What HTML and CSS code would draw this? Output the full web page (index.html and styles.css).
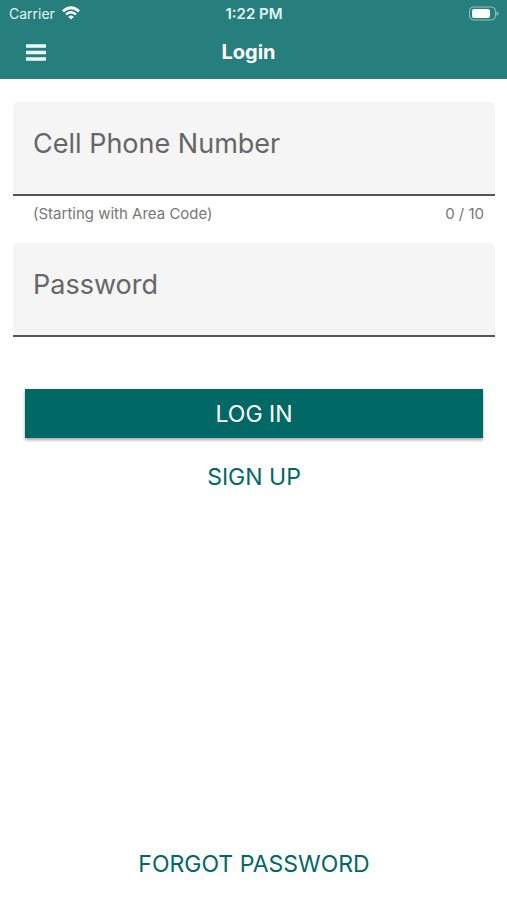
FILE: index.html
```html
<!DOCTYPE html>
<html lang="en">
<head>
<meta charset="utf-8">
<meta name="viewport" content="width=device-width, initial-scale=1">
<title>Login</title>
<link rel="stylesheet" href="styles.css">
</head>
<body>
<header class="header">
  <div class="status">
    <div class="carrier">
      <span>Carrier</span>
      <svg class="wifi" viewBox="0 0 18 14" aria-hidden="true">
        <path d="M1 5.200Q9 -1.800 17 5.200" fill="none" stroke="currentColor" stroke-width="2.800"/>
        <path d="M4 8.400Q9 3.900 14 8.400" fill="none" stroke="currentColor" stroke-width="2.400"/>
        <path d="M6.200 10.700Q9 8.500 11.800 10.700L9 13.600Z" fill="currentColor"/>
      </svg>
    </div>
    <span class="time">1:22 PM</span>
    <svg class="battery" viewBox="0 0 31 15" aria-hidden="true">
      <rect x="1.500" y="1" width="26" height="13" rx="4" fill="none" stroke="#fff" stroke-opacity=".5"/>
      <rect x="4" y="3" width="18" height="9" rx="2" fill="#fff"/>
      <path d="M28.500 5Q30.500 6 30.500 7.500T28.500 10Z" fill="#fff" fill-opacity=".5"/>
    </svg>
  </div>
  <div class="navbar">
    <button class="menu" type="button" aria-label="Menu">
      <svg class="menu-icon" viewBox="0 0 20 17" aria-hidden="true">
        <path d="M0 2H20M0 8.500H20M0 15H20" stroke="currentColor" stroke-width="3.600"/>
      </svg>
    </button>
    <h1 class="title">Login</h1>
  </div>
</header>
<main class="main">
  <form class="form">
    <div class="field">
      <label class="label" for="phone">Cell Phone Number</label>
      <input class="input" id="phone" type="tel" maxlength="10" aria-describedby="phone-hint">
    </div>
    <div class="hint">
      <span id="phone-hint">(Starting with Area Code)</span>
      <span>0 / 10</span>
    </div>
    <div class="field">
      <label class="label" for="password">Password</label>
      <input class="input" id="password" type="password">
    </div>
    <button class="submit" type="submit">LOG IN</button>
  </form>
  <a class="link" href="#signup">SIGN UP</a>
  <a class="link forgot" href="#forgot">FORGOT PASSWORD</a>
</main>
</body>
</html>
```
FILE: styles.css
```css
* {
  box-sizing: border-box;
}

body {
  display: flex;
  flex-direction: column;
  min-height: 100vh;
  margin: 0;
  background: #fff;
  color: #666;
  font-family: Inter, "Liberation Sans", sans-serif;
}

.header {
  padding-bottom: 3px;
  background: #267f7d;
  color: #fff;
}

.status {
  display: grid;
  grid-template-columns: 1fr auto 1fr;
  align-items: center;
  height: 26px;
  padding: 0 8px 0 9px;
  font-size: 14px;
}

.carrier {
  display: flex;
  align-items: center;
  gap: 7px;
  color: #e4f4f3;
}

.wifi {
  width: 18px;
  height: 14px;
  color: #fff;
}

.time {
  color: #e4f4f3;
  font-size: 15px;
  font-weight: 600;
}

.battery {
  width: 31px;
  height: 15px;
  justify-self: end;
}

.navbar {
  display: grid;
  grid-template-columns: 1fr auto 1fr;
  align-items: center;
  height: 50px;
  padding: 2px 26px 0 16px;
}

.menu {
  display: flex;
  justify-self: start;
  padding: 10px;
  border: 0;
  background: none;
  color: #eefafa;
}

.menu-icon {
  width: 20px;
  height: 17px;
}

.title {
  margin: 0;
  font-size: 20px;
  font-weight: 700;
}

.main {
  display: flex;
  flex: 1;
  flex-direction: column;
  align-items: center;
  padding: 23px 12px 20px 13px;
}

.form {
  display: flex;
  flex-direction: column;
  width: 100%;
}

.field {
  display: grid;
  height: 94px;
  border-bottom: 2px solid #555;
  border-radius: 5px 5px 0 0;
  background: #f5f5f5;
}

.label,
.input {
  grid-area: 1 / 1;
  padding: 0 20px;
  font-size: 27px;
}

.label {
  padding-top: 24px;
  line-height: 36px;
}

.input {
  width: 100%;
  border: 0;
  background: none;
  color: #222;
  font-family: inherit;
}

.hint {
  display: flex;
  justify-content: space-between;
  padding: 8px 11px 19px 20px;
  color: #777;
  font-size: 15px;
  line-height: 20px;
}

.submit {
  height: 49px;
  margin: 52px 12px 0;
  border: 0;
  background: #006865;
  box-shadow: 0 2px 3px rgba(0, 0, 0, 0.35);
  color: #fff;
  font-family: inherit;
  font-size: 23px;
}

.link {
  margin-top: 23px;
  color: #006865;
  font-size: 23px;
  line-height: 32px;
  text-decoration: none;
}

.forgot {
  margin-top: auto;
}
```
